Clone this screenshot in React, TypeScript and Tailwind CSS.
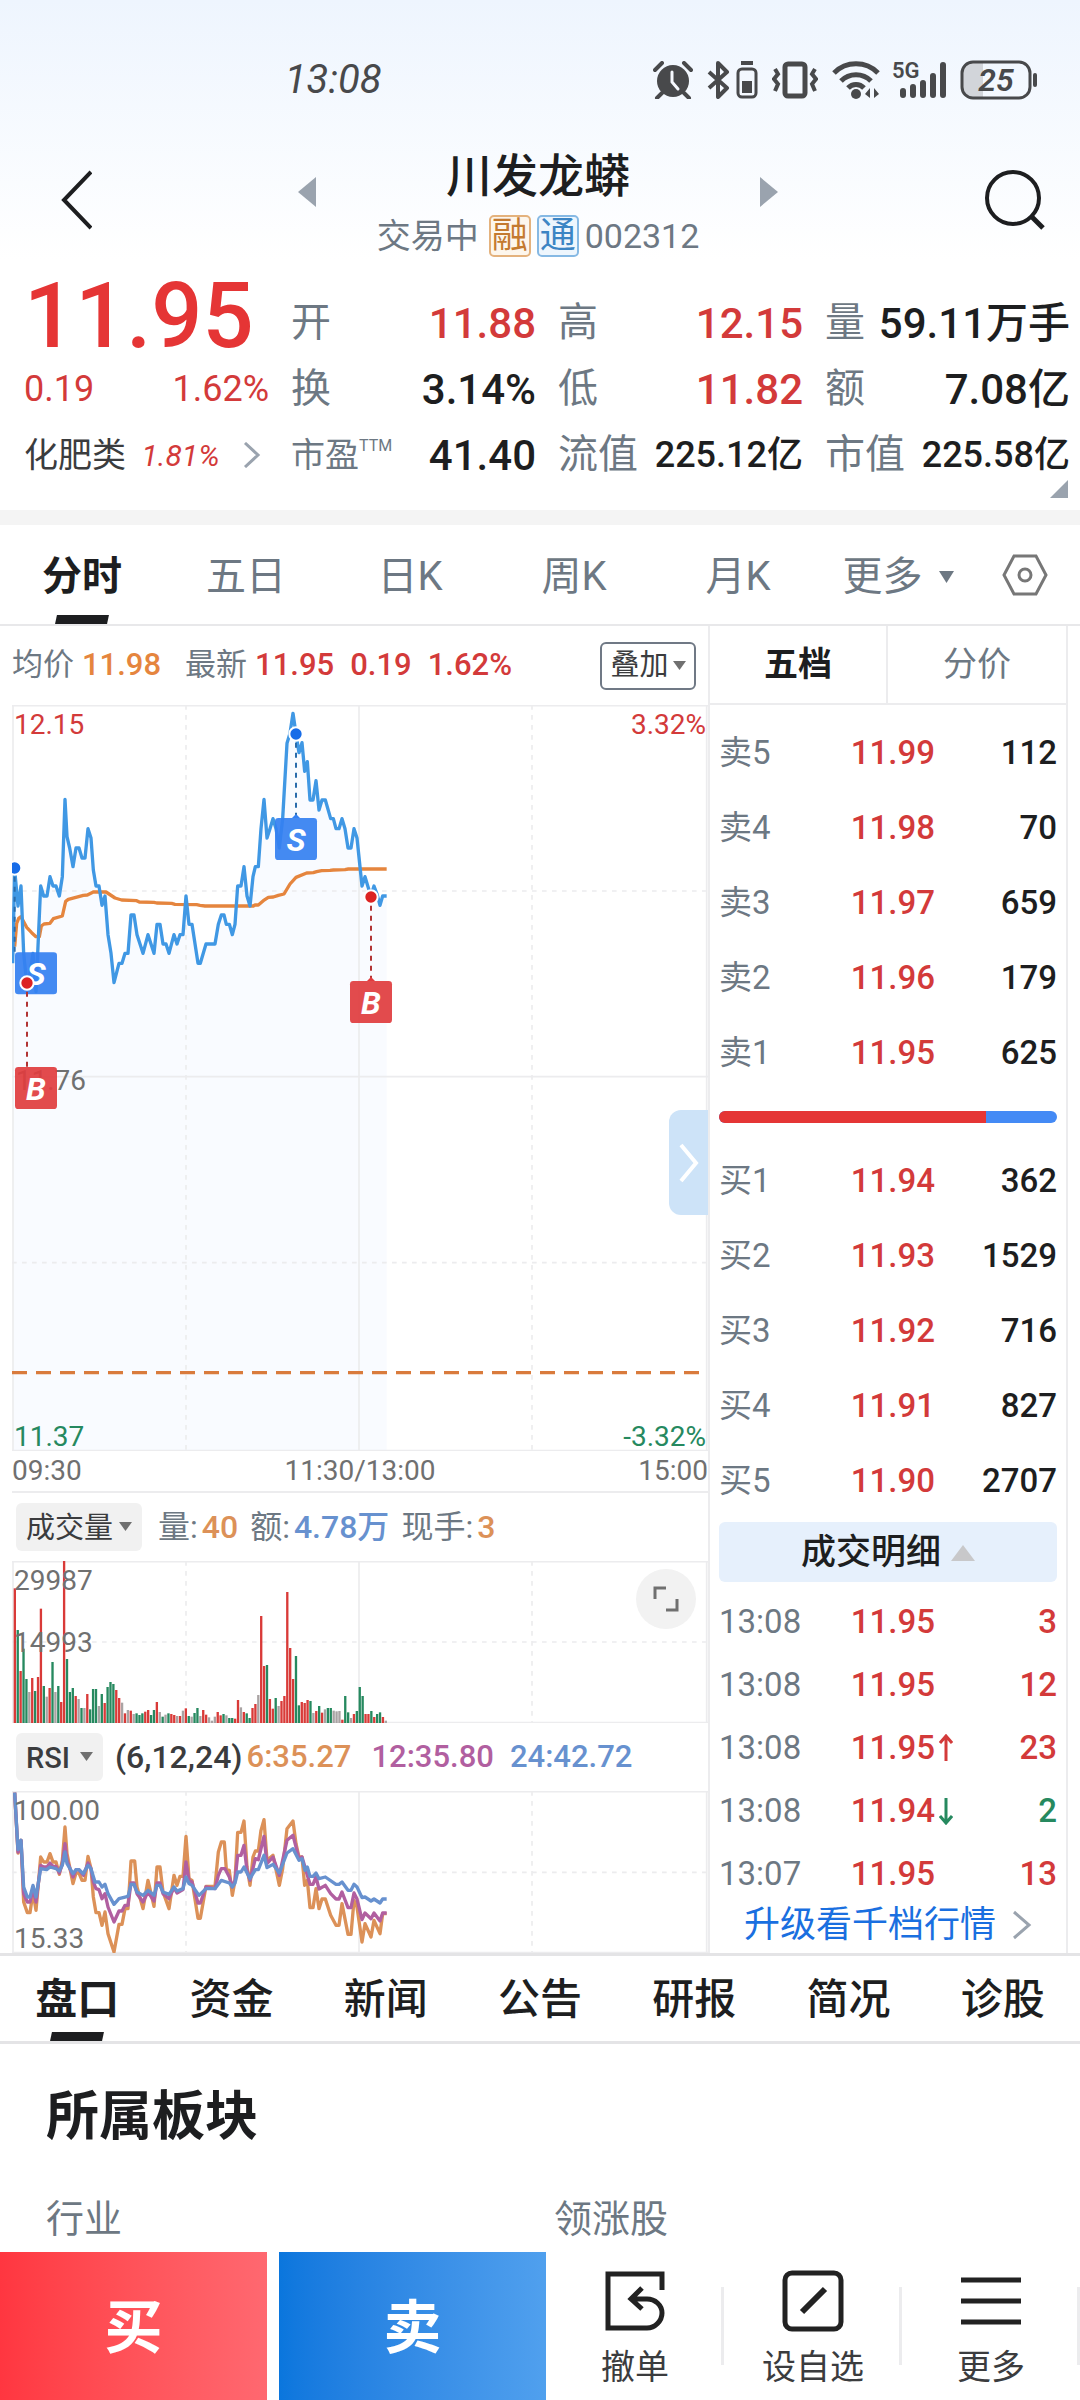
import { useState } from "react";
import clsx from "clsx";

const RED = "text-[#d33a3a]";
const GREEN = "text-[#26895f]";

const periods = ["分时", "五日", "日K", "周K", "月K"];
const infoTabs = ["盘口", "资金", "新闻", "公告", "研报", "简况", "诊股"];

const quotes = [
  { label: "开", value: "11.88", up: true },
  { label: "高", value: "12.15", up: true },
  { label: "量", value: "59.11万手" },
  { label: "换", value: "3.14%" },
  { label: "低", value: "11.82", up: true },
  { label: "额", value: "7.08亿" },
  { label: "市盈", sup: "TTM", value: "41.40" },
  { label: "流值", value: "225.12亿", small: true },
  { label: "市值", value: "225.58亿", small: true },
];

const sells = [
  ["卖5", "11.99", "112"],
  ["卖4", "11.98", "70"],
  ["卖3", "11.97", "659"],
  ["卖2", "11.96", "179"],
  ["卖1", "11.95", "625"],
];

const buys = [
  ["买1", "11.94", "362"],
  ["买2", "11.93", "1529"],
  ["买3", "11.92", "716"],
  ["买4", "11.91", "827"],
  ["买5", "11.90", "2707"],
];

const trades = [
  { time: "13:08", price: "11.95", volume: "3", dir: "" },
  { time: "13:08", price: "11.95", volume: "12", dir: "" },
  { time: "13:08", price: "11.95", volume: "23", dir: "up" },
  { time: "13:08", price: "11.94", volume: "2", dir: "down" },
  { time: "13:07", price: "11.95", volume: "13", dir: "" },
];

// All three charts share the same x scale, one minute is about 8.6 units
const priceLine =
  "38,820 44,540 54,648 63,588 71,790 80,878 90,850 99,790 108,905 122,588 131,618 141,618 150,560 159,588 168,588 178,618 187,560 195,328 201,440 209,474 219,530 228,474 237,474 246,504 255,504 264,416 273,444 280,540 288,588 297,588 306,646 315,618 324,734 333,790 342,878 357,820 366,820 375,790 384,790 393,675 402,675 411,734 429,790 444,734 462,790 471,703 480,703 489,762 498,762 507,790 522,734 531,762 540,734 549,734 558,618 567,703 576,703 594,820 601,820 618,762 645,762 655,703 664,675 672,675 679,703 688,703 697,734 705,703 713,588 723,588 732,530 741,618 750,648 759,560 766,530 775,530 783,416 792,328 801,444 810,416 819,386 828,416 838,474 848,386 861,160 870,130 879,70 888,132 897,188 906,158 914,244 922,215 930,330 939,330 948,272 957,360 966,330 976,330 992,386 1000,386 1008,416 1017,416 1026,386 1035,416 1044,474 1053,474 1062,416 1071,444 1086,588 1095,560 1104,590 1113,618 1122,588 1131,612 1140,646 1148,618 1160,618";

const averageLine =
  "44,770 50,700 56,685 63,680 80,712 95,728 108,740 118,740 124,708 132,702 150,700 160,686 187,678 197,634 205,628 250,616 262,615 280,606 318,606 345,624 365,630 410,632 418,636 462,637 470,639 515,640 525,643 590,644 600,646 615,648 760,648 765,645 775,645 790,632 805,622 820,621 835,616 852,612 870,582 888,562 920,549 940,548 950,545 965,542 990,541 1000,540 1035,539 1045,537 1160,537";

const volumeBars =
  "405r 280g 157r 224g 133g 94n 136r 97g 139r 344r 112g 80n 106r 184g 94n 112g 64r 490r 193g 94g 106g 82r 73n 46g 46n 88r 42g 103g 103g 52n 88g 61r 109g 124g 118g 100r 76r 62n 30r 40n 38r 28n 30g 25g 30g 35r 40r 25g 40g 64r 34n 20g 26n 30g 28r 25r 22n 22r 38n 45r 22g 20n 31g 46g 22n 40r 26r 18n 8n 20n 34r 24r 28g 24n 16g 16g 14r 70r 48n 34r 30g 16g 46r 58r 85n 322r 172r 175g 73r 44r 76g 52n 67r 82r 394r 226r 133r 202g 54g 64r 61r 70r 67g 31n 37r 52g 32r 42n 46g 46g 38n 36n 37n 11r 82g 33g 16n 28r 37g 109g 82g 28r 28r 37g 19r 28g 33g 19r 8n".split(
    " "
  );

const rsi6 =
  "44,937 54,1118 63,1080 71,1265 82,1297 90,1297 99,1235 108,1290 116,1200 122,1130 131,1145 141,1145 150,1120 159,1145 168,1145 178,1182 187,1140 195,1040 201,1120 219,1210 228,1178 237,1178 246,1200 255,1200 264,1128 273,1165 280,1250 288,1297 297,1297 306,1335 315,1295 324,1360 342,1415 357,1332 366,1332 375,1285 384,1285 393,1142 404,1142 411,1220 429,1285 444,1200 462,1278 471,1160 480,1160 489,1235 507,1285 522,1185 531,1215 540,1188 549,1188 558,1068 567,1195 576,1200 594,1314 601,1314 618,1218 645,1218 655,1115 664,1085 673,1085 679,1168 688,1170 697,1245 705,1200 713,1056 723,1056 732,1022 741,1160 750,1215 759,1130 766,1112 775,1112 783,1050 792,1018 801,1140 819,1125 838,1215 848,1165 861,1045 879,1022 888,1090 897,1130 906,1130 914,1215 922,1200 930,1282 939,1282 948,1225 957,1285 966,1256 976,1256 992,1305 1008,1335 1017,1335 1026,1270 1044,1362 1053,1362 1062,1260 1071,1280 1086,1385 1095,1330 1113,1370 1122,1320 1140,1360 1148,1300 1160,1300";

const rsi12 =
  "44,937 54,1115 63,1080 71,1240 82,1265 90,1265 99,1225 108,1265 122,1155 131,1160 141,1160 150,1148 159,1158 168,1158 178,1178 187,1150 195,1090 201,1140 219,1190 228,1168 237,1168 250,1185 264,1148 273,1165 280,1205 288,1225 297,1228 306,1255 315,1240 324,1280 342,1325 357,1292 366,1292 375,1275 384,1275 393,1208 402,1208 411,1240 429,1265 444,1235 462,1262 471,1208 480,1208 489,1240 507,1255 522,1222 531,1238 549,1228 558,1145 567,1200 576,1205 594,1268 601,1268 618,1220 645,1225 655,1185 664,1165 675,1165 688,1190 697,1220 705,1200 713,1125 723,1125 732,1095 741,1170 750,1200 766,1135 775,1138 792,1068 801,1150 819,1130 838,1185 861,1080 879,1065 897,1135 906,1130 930,1212 939,1212 948,1190 957,1226 976,1215 992,1240 1008,1256 1017,1256 1026,1235 1044,1282 1053,1282 1062,1238 1071,1256 1086,1318 1095,1298 1113,1315 1122,1298 1140,1322 1148,1298 1160,1298";

const rsi24 =
  "44,937 54,1108 63,1080 71,1220 82,1250 90,1250 99,1215 108,1250 122,1165 140,1168 150,1160 168,1165 178,1172 187,1155 195,1115 201,1150 219,1180 228,1168 237,1168 250,1180 264,1155 273,1165 285,1205 297,1205 306,1220 315,1212 324,1240 342,1272 357,1255 384,1248 393,1212 402,1212 411,1235 429,1245 444,1230 462,1245 471,1215 480,1215 489,1235 507,1242 522,1220 531,1232 549,1225 558,1190 567,1210 576,1215 597,1245 618,1225 645,1225 664,1200 688,1208 697,1220 705,1208 713,1175 723,1175 732,1160 750,1195 766,1168 775,1168 792,1125 801,1162 819,1152 838,1178 861,1118 879,1105 897,1140 906,1135 915,1170 922,1160 930,1188 939,1188 948,1178 957,1195 976,1190 1008,1212 1017,1212 1026,1205 1044,1230 1053,1230 1062,1212 1071,1220 1086,1252 1095,1250 1113,1262 1122,1256 1140,1268 1148,1256 1160,1256";

const barColors: Record<string, string> = {
  r: "#d93a38",
  g: "#26895f",
  n: "#a9a3a3",
};

function Triangle({ className, points }: { className: string; points: string }) {
  return (
    <svg className={className} viewBox="0 0 20 20" preserveAspectRatio="none" aria-hidden="true">
      <polygon points={points} fill="currentColor" />
    </svg>
  );
}

const DOWN = "0,0 20,0 10,20";
const UP = "0,20 20,20 10,0";

function StatusBar() {
  return (
    <div className="flex h-[140px] items-center justify-between pl-[26%] pr-[42px] pt-5 text-[#48494b]">
      <span className="pl-1 text-[40px] italic leading-none">13:08</span>
      <div className="flex items-center">
        <svg className="mr-3.5 h-[38px] w-10" viewBox="0 0 40 38" aria-hidden="true">
          <circle cx="20" cy="20" r="16" fill="currentColor" />
          <path d="M2 9 9 2M38 9 31 2M9 32l-5 5M31 32l5 5" stroke="currentColor" strokeWidth="4" strokeLinecap="round" />
          <path d="M19 11v10l6 7" stroke="#f6f9ff" strokeWidth="3" fill="none" strokeLinecap="round" />
        </svg>
        <svg className="mr-3.5 h-[38px] w-[51px]" viewBox="0 0 51 38" fill="none" aria-hidden="true">
          <path d="m2 11 18 16-9 9V2l9 9L2 27" stroke="currentColor" strokeWidth="4" strokeLinejoin="round" />
          <rect x="31" y="8" width="18" height="28" rx="4" stroke="currentColor" strokeWidth="3" />
          <path d="M34 2h12" stroke="currentColor" strokeWidth="4" />
          <rect x="35" y="20" width="10" height="12" fill="currentColor" />
        </svg>
        <svg className="mr-3.5 h-[38px] w-[46px]" viewBox="0 0 46 38" fill="none" stroke="currentColor" aria-hidden="true">
          <rect x="13" y="3" width="20" height="32" rx="3" strokeWidth="5" />
          <path d="m3 8 3 5-4 5 4 5-3 7M43 8l-3 5 4 5-4 5 3 7" strokeWidth="4" />
        </svg>
        <svg className="mr-3 h-[38px] w-12" viewBox="0 0 48 38" fill="none" stroke="currentColor" aria-hidden="true">
          <path d="M2 12a31 31 0 0 1 44 0" strokeWidth="5" />
          <path d="M9 20a21 21 0 0 1 30 0" strokeWidth="5" />
          <path d="M16 27a11 11 0 0 1 16 0" strokeWidth="5" />
          <circle cx="24" cy="33" r="5" fill="currentColor" stroke="none" />
          <path d="m33 33 5-6v10zM47 33l-5-6v10z" fill="currentColor" stroke="none" />
        </svg>
        <div className="relative mr-3.5 h-[38px] w-[54px]">
          <span className="absolute left-0 top-0 text-[22px] font-semibold leading-5">5G</span>
          <svg className="h-full w-full" viewBox="0 0 54 38" stroke="currentColor" strokeWidth="6" strokeLinecap="round" aria-hidden="true">
            <path d="M11 30v4M21 26v8M31 22v12M41 15v19M51 4v30" />
          </svg>
        </div>
        <div className="relative h-10 w-[78px]">
          <svg className="h-full w-full" viewBox="0 0 78 40" fill="none" aria-hidden="true">
            <path d="M12 2h11v36H12A10 10 0 0 1 2 28V12A10 10 0 0 1 12 2Z" fill="#d2d5da" />
            <rect x="2" y="2" width="68" height="36" rx="11" stroke="currentColor" strokeWidth="3" />
            <path d="M75 15v10" stroke="currentColor" strokeWidth="4" strokeLinecap="round" />
          </svg>
          <span className="absolute left-0 top-0 w-[72px] text-center text-[32px] font-semibold italic leading-10">25</span>
        </div>
      </div>
    </div>
  );
}

function Header() {
  return (
    <header className="flex h-[120px] items-center justify-between pl-[60px] pr-[34px] text-[#1d1e20]">
      <button aria-label="返回">
        <svg className="h-[60px] w-8" viewBox="0 0 32 60" fill="none" aria-hidden="true">
          <path d="M31 2 4 30l27 28" stroke="currentColor" strokeWidth="4" />
        </svg>
      </button>
      <div className="flex w-[480px] items-center justify-between">
        <button className="pb-4 text-[#9aa3ae]" aria-label="上一只">
          <Triangle className="h-[30px] w-[18px]" points="20,0 20,20 0,10" />
        </button>
        <div className="text-center">
          <h1 className="text-[46px] font-medium leading-[72px]">川发龙蟒</h1>
          <div className="flex items-center gap-1.5 text-[34px] leading-[48px] text-[#6d7883]">
            <span>交易中</span>
            <span className="ml-1 rounded-[5px] border-2 border-[#e4b27d] bg-[#fdf6ec] px-px text-[36px] leading-[38px] text-[#c47a2f]">
              融
            </span>
            <span className="rounded-[5px] border-2 border-[#86b9e4] bg-[#eef6fd] px-px text-[36px] leading-[38px] text-[#3c85c4]">
              通
            </span>
            <span>002312</span>
          </div>
        </div>
        <button className="pb-4 text-[#9aa3ae]" aria-label="下一只">
          <Triangle className="h-[30px] w-[18px]" points="0,0 20,10 0,20" />
        </button>
      </div>
      <button aria-label="搜索">
        <svg className="h-[62px] w-[62px]" viewBox="0 0 62 62" fill="none" stroke="currentColor" strokeWidth="4" aria-hidden="true">
          <circle cx="29" cy="29" r="26" />
          <path d="m47 47 12 12" strokeWidth="5" />
        </svg>
      </button>
    </header>
  );
}

function Quote() {
  return (
    <section className="relative grid grid-cols-4 gap-x-[22px] pb-[22px] pl-6 pr-2.5 pt-[30px]">
      <div>
        <div className="flex h-[66px] items-center pb-3 text-[90px] font-medium leading-none text-[#e53535]">
          11.95
        </div>
        <div className={clsx("flex h-[66px] items-center justify-between text-[36px]", RED)}>
          <span>0.19</span>
          <span>1.62%</span>
        </div>
        <a href="#sector" className="flex h-[66px] items-center justify-between text-[34px] text-[#3b3c3e]">
          <span>化肥类</span>
          <span className={clsx("text-[30px] italic", RED)}>1.81%</span>
          <svg className="mx-2 h-[26px] w-[18px] text-[#9aa3ae]" viewBox="0 0 18 26" fill="none" aria-hidden="true">
            <path d="m2 1 13 12L2 25" stroke="currentColor" strokeWidth="3" />
          </svg>
        </a>
      </div>
      <dl className="col-span-3 grid grid-cols-3 gap-x-[22px]">
        {quotes.map((item) => (
          <div key={item.label} className="flex h-[66px] items-center justify-between whitespace-nowrap">
            <dt className={clsx("flex text-[#6d7883]", item.sup ? "text-[34px]" : "text-[40px]")}>
              {item.label}
              {item.sup && <sup className="top-0 text-[16px] leading-8">{item.sup}</sup>}
            </dt>
            <dd
              className={clsx(
                "font-medium",
                item.small ? "text-[36px]" : "text-[42px]",
                item.up ? RED : "text-[#1d1e20]"
              )}
            >
              {item.value}
            </dd>
          </div>
        ))}
      </dl>
      <Triangle className="absolute bottom-3 right-3 h-[18px] w-[18px] text-[#9aa3ae]" points="20,0 20,20 0,20" />
    </section>
  );
}

function Grid({ top, height }: { top: number; height: number }) {
  const bottom = top + height;
  return (
    <g stroke="#ececee" strokeWidth="5" fill="none">
      <path d={`M39 ${top}V${bottom}M1077 ${top}V${bottom}M2120 ${top}V${bottom}`} />
      <path d={`M36 ${top + 2}H2124M36 ${bottom - 1}H2124`} />
      <path d={`M558 ${top}V${bottom}M1596 ${top}V${bottom}`} strokeDasharray="14 16" />
    </g>
  );
}

function Marker({ x, y, boxX, boxY, kind }: { x: number; y: number; boxX: number; boxY: number; kind: "S" | "B" }) {
  const sell = kind === "S";
  return (
    <g>
      <path d={`M${x} ${y + 26}V${boxY}`} stroke={sell ? "#2a6cab" : "#b23434"} strokeWidth="6" strokeDasharray="15 15" />
      <rect x={boxX} y={boxY} width="126" height="126" rx="10" fill={sell ? "#3480f1" : "#e03c3e"} opacity="0.92" />
      {boxX + 63 === x && (
        <path d={`M${x - 12} ${boxY}l12 -12 12 12z`} fill={sell ? "#3480f1" : "#e03c3e"} />
      )}
      <text x={boxX + 63} y={boxY + 98} textAnchor="middle" fontSize="96" fontWeight="700" fontStyle="italic" fill="#fff">
        {kind}
      </text>
      <circle cx={x} cy={y} r="20" fill={sell ? "#176ce8" : "#dc2323"} stroke="#fff" strokeWidth="6" />
    </g>
  );
}

function PriceChart() {
  return (
    <div className="relative">
      <svg className="block w-full" viewBox="36 45 2088 2238" role="img" aria-label="分时走势">
        <polygon points={`${priceLine} 1160,2283 38,2283`} fill="#f9fbff" />
        <Grid top={45} height={2238} />
        <path d="M36 1160H2124" stroke="#ececee" strokeWidth="5" />
        <path d="M36 603H2124M36 1718H2124" stroke="#ececee" strokeWidth="5" strokeDasharray="14 16" />
        <path d="M36 2048H2124" stroke="#d97b3c" strokeWidth="10" strokeDasharray="45 27" />
        <text x="47" y="1200" fontSize="84" fill="#707070">
          11.76
        </text>
        <polyline points={averageLine} fill="none" stroke="#e5853e" strokeWidth="10" strokeLinejoin="round" />
        <polyline points={priceLine} fill="none" stroke="#4098e4" strokeWidth="10" strokeLinejoin="round" />
        <Marker x={44} y={534} boxX={45} boxY={787} kind="S" />
        <Marker x={81} y={879} boxX={45} boxY={1131} kind="B" />
        <Marker x={888} y={132} boxX={825} boxY={384} kind="S" />
        <Marker x={1113} y={621} boxX={1050} boxY={873} kind="B" />
      </svg>
      <span className={clsx("absolute left-0.5 top-1 text-[28px] leading-8", RED)}>12.15</span>
      <span className={clsx("absolute right-0.5 top-1 text-[28px] leading-8", RED)}>3.32%</span>
      <span className={clsx("absolute bottom-0 left-0.5 text-[28px] leading-7", GREEN)}>11.37</span>
      <span className={clsx("absolute bottom-0 right-0.5 text-[28px] leading-7", GREEN)}>-3.32%</span>
      <button
        className="absolute right-0 top-[405px] flex h-[105px] w-[39px] items-center justify-center rounded-l-xl bg-[#cde3f8]"
        aria-label="收起盘口"
      >
        <svg className="h-10 w-5" viewBox="0 0 20 40" fill="none" aria-hidden="true">
          <path d="m2 2 15 18L2 38" stroke="#fff" strokeWidth="4" />
        </svg>
      </button>
    </div>
  );
}

function VolumeChart() {
  const step = 1113 / (volumeBars.length - 1);
  return (
    <div className="relative">
      <svg className="block w-full" viewBox="36 243 2088 486" role="img" aria-label="成交量">
        <Grid top={243} height={486} />
        <path d="M36 486H2124" stroke="#ececee" strokeWidth="5" strokeDasharray="14 16" />
        {volumeBars.map((bar, i) => {
          const height = parseInt(bar, 10);
          return (
            <rect key={i} x={41 + i * step} y={730 - height} width="7" height={height} fill={barColors[bar.slice(-1)]} />
          );
        })}
      </svg>
      <span className="absolute left-0.5 top-1 text-[28px] leading-8 text-[#707070]">29987</span>
      <span className="absolute left-0.5 top-[66px] text-[28px] leading-8 text-[#707070]">14993</span>
      <button
        className="absolute right-3 top-2 flex h-[60px] w-[60px] items-center justify-center rounded-full bg-[#f2f2f2]"
        aria-label="全屏"
      >
        <svg className="h-[26px] w-[26px]" viewBox="0 0 26 26" fill="none" aria-hidden="true">
          <path d="M13 2H2v11M13 24h11V13" stroke="#707070" strokeWidth="3" />
        </svg>
      </button>
    </div>
  );
}

function RsiChart() {
  return (
    <div className="relative">
      <svg className="block w-full" viewBox="36 932 2088 486" role="img" aria-label="RSI">
        <Grid top={932} height={486} />
        <path d="M36 1176H2124" stroke="#ececee" strokeWidth="5" strokeDasharray="14 16" />
        <g fill="none" strokeWidth="10" strokeLinejoin="round">
          <polyline points={rsi6} stroke="#dc9158" />
          <polyline points={rsi12} stroke="#b15fa0" />
          <polyline points={rsi24} stroke="#6791cf" />
        </g>
      </svg>
      <span className="absolute left-0.5 top-1 text-[28px] leading-8 text-[#707070]">100.00</span>
      <span className="absolute bottom-0 left-0.5 text-[28px] leading-7 text-[#707070]">15.33</span>
    </div>
  );
}

function IndicatorSelect({ label, options, className }: { label: string; options: string[]; className: string }) {
  return (
    <div className={clsx("relative mr-3 h-12 rounded-md bg-[#f1f1f1] text-[#3b3c3e]", className)}>
      <select aria-label={label} className="h-12 w-full appearance-none bg-transparent pl-2.5 text-[29px] leading-[48px]">
        {options.map((option) => (
          <option key={option}>{option}</option>
        ))}
      </select>
      <Triangle className="pointer-events-none absolute right-2.5 top-[19px] h-[9px] w-[13px] text-[#707070]" points={DOWN} />
    </div>
  );
}

function ChartPane() {
  return (
    <div className="min-w-0">
      <div className="flex h-[79px] items-center whitespace-nowrap pr-3 text-[31px]">
        <span className="text-[#6d7883]">均价</span>
        <span className="ml-2 font-medium text-[#e5853e]">11.98</span>
        <span className="ml-6 text-[#6d7883]">最新</span>
        <span className={clsx("ml-2 flex gap-4 font-medium", RED)}>
          <span>11.95</span>
          <span>0.19</span>
          <span>1.62%</span>
        </span>
        <button className="ml-auto flex h-12 w-24 items-center justify-center gap-1 rounded-md border-2 border-[#707985] text-[29px] text-[#3b3c3e]">
          叠加
          <Triangle className="h-[9px] w-[13px] text-[#707070]" points={DOWN} />
        </button>
      </div>
      <PriceChart />
      <div className="flex h-[42px] justify-between overflow-hidden border-b-2 border-[#ececee] text-[28px] leading-10 text-[#707070]">
        <span>09:30</span>
        <span>11:30/13:00</span>
        <span>15:00</span>
      </div>
      <div className="flex h-[68px] items-center gap-1 whitespace-nowrap pl-1 text-[32px] text-[#6d7883]">
        <IndicatorSelect label="副图指标一" options={["成交量", "MACD", "KDJ"]} className="w-[126px]" />
        <span>量:</span>
        <span className="mr-2 font-medium text-[#dc9158]">40</span>
        <span>额:</span>
        <span className="mr-2 font-medium text-[#6791cf]">4.78万</span>
        <span>现手:</span>
        <span className="font-medium text-[#dc9158]">3</span>
      </div>
      <VolumeChart />
      <div className="flex h-[68px] items-center whitespace-nowrap pl-1 text-[32px] font-medium">
        <IndicatorSelect label="副图指标二" options={["RSI", "BOLL", "WR"]} className="w-[87px]" />
        <span className="text-[#3b3c3e]">(6,12,24)</span>
        <span className="ml-1 text-[31px] text-[#dc9158]">6:35.27</span>
        <span className="ml-5 text-[31px] text-[#b15fa0]">12:35.80</span>
        <span className="ml-4 text-[31px] text-[#6791cf]">24:42.72</span>
      </div>
      <RsiChart />
    </div>
  );
}

function LevelTable({ rows }: { rows: string[][] }) {
  return (
    <table className="w-full table-fixed text-[33px]">
      <tbody>
        {rows.map(([label, price, volume]) => (
          <tr key={label} className="h-[75px]">
            <th className="w-[39%] text-left font-normal text-[#6d7883]">{label}</th>
            <td className={clsx("w-[30%] font-medium", RED)}>{price}</td>
            <td className="text-right font-medium text-[#1d1e20]">{volume}</td>
          </tr>
        ))}
      </tbody>
    </table>
  );
}

function OrderPane() {
  return (
    <aside className="flex min-w-0 flex-col border-x-2 border-[#ececee]">
      <div className="grid h-[79px] grid-cols-2 border-b-2 border-[#ececee] text-[34px]">
        <button className="border-r-2 border-[#ececee] font-bold text-[#1d1e20]">五档</button>
        <button className="text-[#6d7883]">分价</button>
      </div>
      <div className="px-[9px] pt-2.5">
        <LevelTable rows={sells} />
        <div className="mb-5 mt-[21px] flex h-3 overflow-hidden rounded-full bg-[#448af5]">
          <div className="w-[79%] bg-[#e53535]" />
        </div>
        <LevelTable rows={buys} />
        <button className="mt-1 flex h-[60px] w-full items-center justify-center gap-2.5 rounded-md bg-[#e6f0fc] pt-0.5 text-[35px] font-medium text-[#1d1e20]">
          成交明细
          <Triangle className="h-4 w-6 text-[#c8c8ca]" points={UP} />
        </button>
        <table className="mt-2 w-full table-fixed text-[33px]">
          <tbody>
            {trades.map((trade, i) => (
              <tr key={i} className="h-[63px]">
                <td className="w-[39%] text-[#6d7883]">{trade.time}</td>
                <td className={clsx("w-[35%] font-medium", RED)}>
                  <span className="flex items-center gap-1">
                    {trade.price}
                    {trade.dir && (
                      <svg
                        className={clsx("h-7 w-3.5", trade.dir === "down" && "rotate-180", trade.dir === "down" && GREEN)}
                        viewBox="0 0 14 28"
                        fill="none"
                        aria-label={trade.dir === "up" ? "上涨" : "下跌"}
                      >
                        <path d="M7 27V3M1 9l6-7 6 7" stroke="currentColor" strokeWidth="3" />
                      </svg>
                    )}
                  </span>
                </td>
                <td className={clsx("text-right font-medium", trade.dir === "down" ? GREEN : RED)}>{trade.volume}</td>
              </tr>
            ))}
          </tbody>
        </table>
        <a href="#level2" className="flex h-10 items-center justify-center gap-4 text-[36px] leading-10 text-[#1a6fe0]">
          升级看千档行情
          <svg className="h-[30px] w-5 text-[#9aa3ae]" viewBox="0 0 20 30" fill="none" aria-hidden="true">
            <path d="m2 2 15 13L2 28" stroke="currentColor" strokeWidth="3" />
          </svg>
        </a>
      </div>
    </aside>
  );
}

function BottomBar() {
  const items = [
    {
      label: "撤单",
      icon: <path d="M58 20V4H4v54h39c8 0 15-7 15-15s-7-14-15-14H28M38 18 27 29l11 10" />,
    },
    {
      label: "设自选",
      icon: (
        <>
          <rect x="3" y="3" width="56" height="56" rx="7" />
          <path d="m20 42 23-23" strokeWidth="6" />
        </>
      ),
    },
    { label: "更多", icon: <path d="M1 10h60M1 31h60M1 52h60" /> },
  ];
  return (
    <footer className="sticky bottom-0 mt-2 grid h-[148px] grid-cols-[91fr_89fr] bg-white">
      <div className="grid grid-cols-2 gap-3 text-[58px] font-bold text-white">
        <button className="bg-linear-to-r from-[#ff3640] to-[#ff6870] pt-1">买</button>
        <button className="bg-linear-to-r from-[#0a76dd] to-[#50a0ee] pt-1">卖</button>
      </div>
      <div className="grid grid-cols-3 items-center text-[34px] text-[#3b3c3e]">
        {items.map((item) => (
          <button key={item.label} className="relative flex h-full flex-col items-center pt-[18px]">
            <svg className="h-[62px] w-[62px]" viewBox="0 0 62 62" fill="none" stroke="#222" strokeWidth="5" aria-hidden="true">
              {item.icon}
            </svg>
            <span className="mt-2.5 leading-[50px]">{item.label}</span>
            <span className="absolute right-0 top-[35px] h-[78px] w-[3px] bg-[#ececee]" />
          </button>
        ))}
      </div>
    </footer>
  );
}

export default function App() {
  const [period, setPeriod] = useState("分时");
  const [infoTab, setInfoTab] = useState("盘口");

  return (
    <div className="min-h-screen bg-white font-['Roboto','Noto_Sans_CJK_SC',sans-serif]">
      <div className="bg-linear-to-b from-[#eef5fe] to-white">
        <StatusBar />
        <Header />
      </div>
      <Quote />
      <div className="h-[15px] bg-[#f4f4f4]" />

      <nav className="grid h-[101px] grid-cols-[repeat(6,41fr)_24fr] border-b-2 border-[#e8e8ea] text-[40px] text-[#6d7883]">
        {periods.map((name) => (
          <button
            key={name}
            onClick={() => setPeriod(name)}
            className={clsx("relative pt-1", period === name && "font-bold text-[#1d1e20]")}
          >
            {name}
            {period === name && (
              <span className="absolute bottom-0 left-1/2 h-[9px] w-[52px] -translate-x-1/2 -skew-x-12 bg-[#1d1e20]" />
            )}
          </button>
        ))}
        <button className="flex items-center justify-center gap-4 pr-2 pt-1">
          更多
          <Triangle className="h-3 w-[15px]" points={DOWN} />
        </button>
        <button className="flex items-center" aria-label="设置">
          <svg className="ml-[18px] h-[42px] w-[46px]" viewBox="0 0 46 42" fill="none" stroke="#777" strokeWidth="3" aria-hidden="true">
            <path d="M12 2h22l10 19-10 19H12L2 21z" />
            <circle cx="23" cy="21" r="6" />
          </svg>
        </button>
      </nav>

      <main>
        <div className="mx-3 grid grid-cols-[29fr_15fr]">
          <ChartPane />
          <OrderPane />
        </div>

        <nav className="grid h-[91px] grid-cols-7 border-y-3 border-[#e4e4e6] text-[42px] text-[#1d1e20]">
          {infoTabs.map((name) => (
            <button
              key={name}
              onClick={() => setInfoTab(name)}
              className={clsx("relative pt-0.5", infoTab === name ? "font-bold" : "font-medium")}
            >
              {name}
              {infoTab === name && (
                <span className="absolute bottom-0 left-1/2 h-[9px] w-[52px] -translate-x-1/2 -skew-x-12 bg-[#1d1e20]" />
              )}
            </button>
          ))}
        </nav>

        <section id="sector" className="px-[46px] pt-10">
          <h2 className="text-[53px] font-bold leading-[66px] text-[#1d1e20]">所属板块</h2>
          <div className="mt-11 grid grid-cols-2 gap-7 text-[38px] leading-[50px] text-[#6d7883]">
            <span>行业</span>
            <span>领涨股</span>
          </div>
        </section>
      </main>

      <BottomBar />
    </div>
  );
}
